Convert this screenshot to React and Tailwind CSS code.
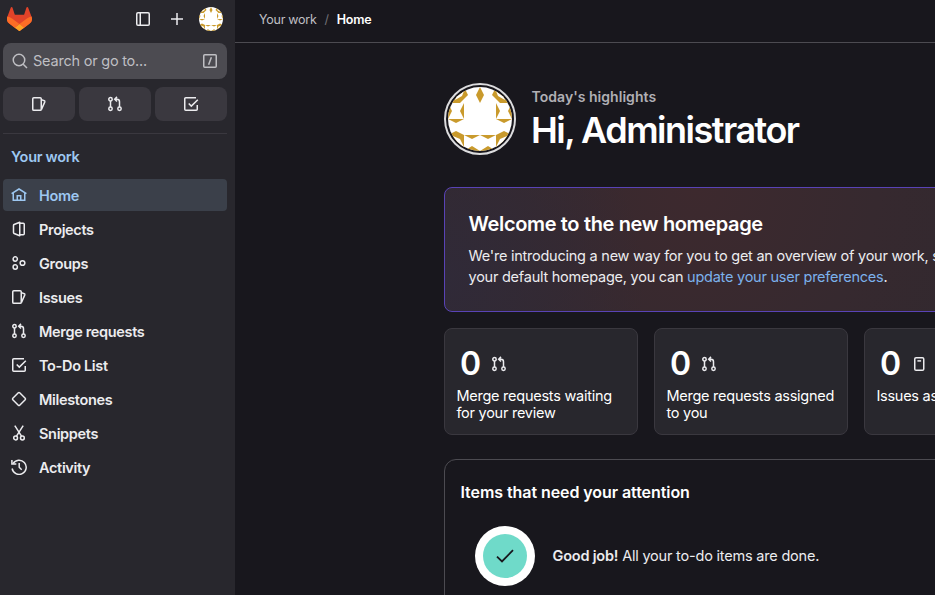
import React from "react";

const iconBody = {
  sidebar: (
    <>
      <rect x="1.75" y="1.75" width="12.5" height="12.5" rx="1.25" />
      <path d="M5.25 1.75v12.5" />
    </>
  ),
  plus: <path d="M8 2v12M2 8h12" />,
  search: (
    <>
      <circle cx="7" cy="7" r="5.75" />
      <path d="M11.2 11.2 15 15" />
    </>
  ),
  slash: (
    <>
      <rect x="1.75" y="1.75" width="12.5" height="12.5" rx="1" />
      <path d="M9.4 4.2 6.6 11.8" />
    </>
  ),
  home: (
    <>
      <path d="M.6 6.6 8 2l7.4 4.6M2.25 5.8v7.45h11.5V5.8" />
      <path d="M6.25 13V8.75h3.5V13" />
    </>
  ),
  project: (
    <>
      <path d="M8.75 1.2 3.1 3.5a1 1 0 0 0-.6.9v7.2c0 .4.2.75.6.9l5.65 2.3z" strokeLinejoin="round" />
      <path d="M8.75 2.25h3.5a1 1 0 0 1 1 1v9.5a1 1 0 0 1-1 1h-3.5" />
    </>
  ),
  group: (
    <>
      <circle cx="4.25" cy="4" r="2.15" />
      <circle cx="4.25" cy="12" r="2.15" />
      <circle cx="11.5" cy="8" r="2.35" />
    </>
  ),
  issues: (
    <>
      <rect x="1.75" y="1.75" width="8.5" height="12.5" rx="1.1" />
      <path d="m10.3 3.6 3 1.1a.9.9 0 0 1 .5 1.15L10.5 13.4" />
    </>
  ),
  merge: (
    <>
      <circle cx="3.5" cy="3.2" r="1.7" />
      <circle cx="3.5" cy="12.8" r="1.7" />
      <circle cx="12.5" cy="12.8" r="1.7" />
      <path d="M3.5 5v6M12.5 11V5.7a2.5 2.5 0 0 0-2.5-2.5H8M10 .9 7.7 3.2 10 5.5" />
    </>
  ),
  todo: (
    <>
      <path d="M13 1.75H2.75a1 1 0 0 0-1 1v10.5a1 1 0 0 0 1 1h10.5a1 1 0 0 0 1-1V9" />
      <path d="m5.7 7.5 2.6 2.6 6.5-6.4" />
    </>
  ),
  milestone: (
    <path d="m7.3 1.8-5.5 5.5a1 1 0 0 0 0 1.4l5.5 5.5a1 1 0 0 0 1.4 0l5.5-5.5a1 1 0 0 0 0-1.4L8.7 1.8a1 1 0 0 0-1.4 0z" />
  ),
  snippet: (
    <>
      <circle cx="4.6" cy="13" r="1.9" />
      <circle cx="11.4" cy="13" r="1.9" />
      <path d="m3.8.6 6.7 10.6M12.2.6 5.5 11.2" />
    </>
  ),
  activity: (
    <>
      <path d="M2 4.6a7.1 7.1 0 1 1-.9 4.9" />
      <path d="M.9 1v4h4.4" />
      <path d="M8.2 4v4.2l2.5 2.5" />
    </>
  ),
  issue: (
    <>
      <rect x="3.75" y="1.75" width="9" height="12.5" rx="1.3" />
      <path d="M6.4 4.9h3.7" />
    </>
  ),
};

function Icon({ name, className = "" }) {
  return (
    <svg
      viewBox="0 0 16 16"
      className={`size-4 shrink-0 ${className}`}
      fill="none"
      stroke="currentColor"
      strokeWidth="1.5"
    >
      {iconBody[name]}
    </svg>
  );
}

function Logo() {
  return (
    <svg width="25" height="24" viewBox="0 0 25 24">
      <path
        fill="#E24329"
        d="m24.507 9.5-.034-.09L21.082.562a.896.896 0 0 0-1.694.091l-2.29 7.01H7.825L5.535.653a.898.898 0 0 0-1.694-.09L.451 9.411.416 9.5a6.297 6.297 0 0 0 2.09 7.278l.012.01.03.022 5.16 3.867 2.56 1.935 1.554 1.176a1.051 1.051 0 0 0 1.268 0l1.555-1.176 2.56-1.935 5.197-3.89.014-.01A6.297 6.297 0 0 0 24.507 9.5Z"
      />
      <path
        fill="#FC6D26"
        d="m24.507 9.5-.034-.09a11.44 11.44 0 0 0-4.56 2.051l-7.447 5.632 4.742 3.584 5.197-3.89.014-.01A6.297 6.297 0 0 0 24.507 9.5Z"
      />
      <path
        fill="#FCA326"
        d="m7.707 20.677 2.56 1.935 1.555 1.176a1.051 1.051 0 0 0 1.268 0l1.555-1.176 2.56-1.935-4.743-3.584-4.795 3.584Z"
      />
      <path
        fill="#FC6D26"
        d="M5.01 11.461a11.43 11.43 0 0 0-4.56-2.05L.416 9.5a6.297 6.297 0 0 0 2.09 7.278l.012.01.03.022 5.16 3.867 4.745-3.584-7.444-5.632Z"
      />
    </svg>
  );
}

// Left half of the identicon; the right half is its mirror image.
function IdenticonHalf() {
  return (
    <>
      <g fill="#c99a2c">
        <path d="M0 16V8l8-8h8l4 8-8 8z" />
        <path d="M32 0l-4 8 4 8z" />
        <path d="M0 16l4 8-4 8zM16 16l-4 8 4 8z" />
        <path d="M0 32h16l-8 4z" />
        <path d="M0 48l8-4 8 4v16H8l-8-8z" />
        <path d="M16 48h16l-8 4zM16 64l8-5 8 5z" />
      </g>
      <g fill="#fff">
        <path d="M7 13l2-5 7-4-2 5z" />
        <path d="M5 49l7 3 4 8-7-4z" />
      </g>
    </>
  );
}

function Identicon({ className }) {
  return (
    <svg viewBox="0 0 64 64" className={`rounded-full bg-white ${className}`}>
      <IdenticonHalf />
      <g transform="translate(64 0) scale(-1 1)">
        <IdenticonHalf />
      </g>
    </svg>
  );
}

const navItems = [
  ["home", "Home"],
  ["project", "Projects"],
  ["group", "Groups"],
  ["issues", "Issues"],
  ["merge", "Merge requests"],
  ["todo", "To-Do List"],
  ["milestone", "Milestones"],
  ["snippet", "Snippets"],
  ["activity", "Activity"],
];

function Sidebar() {
  return (
    <aside className="w-[235px] shrink-0 bg-[#28272d] pl-[3px] pr-2 text-[#ececef]">
      <div className="flex h-[43px] items-start pl-1 pt-[7px]">
        <Logo />
        <div className="ml-auto flex items-center pr-1">
          <Icon name="sidebar" />
          <Icon name="plus" className="ml-[18px]" />
          <Identicon className="ml-[14px] size-6" />
        </div>
      </div>
      <div className="flex h-9 items-center rounded-lg bg-[#4c4b51] pl-[9px] pr-[9px] text-[#bfbfc3]">
        <Icon name="search" />
        <span className="ml-[5px] text-[14.5px] tracking-[-0.22px]">Search or go to...</span>
        <Icon name="slash" className="ml-auto" />
      </div>
      <div className="mt-2 grid grid-cols-3 gap-1">
        {["issues", "merge", "todo"].map((name) => (
          <div key={name} className="flex h-[34px] items-center justify-center rounded-lg bg-[#3a383f]">
            <Icon name={name} />
          </div>
        ))}
      </div>
      <div className="mt-3 border-t border-[#3a383f]" />
      <h2 className="mt-[13px] pl-2 text-[14.5px] font-semibold leading-5 tracking-[-0.3px] text-[#9dc7f1]">
        Your work
      </h2>
      <nav className="mt-3 flex flex-col gap-0.5">
        {navItems.map(([icon, label], i) => (
          <a
            key={label}
            className={`flex h-8 items-center rounded px-2 text-[14.5px] font-semibold tracking-[-0.33px] ${
              i === 0 ? "bg-[#3b404a] text-[#9dc7f1]" : ""
            }`}
          >
            <Icon name={icon} className="mb-px" />
            <span className="ml-3 pt-0.5">{label}</span>
          </a>
        ))}
      </nav>
    </aside>
  );
}

function StatCard({ icon, label }) {
  return (
    <div className="h-[107px] w-[194px] shrink-0 rounded-lg border border-[#3a383f] bg-[#28272d] px-[11px] pt-4">
      <div className="flex h-9 items-center pl-1">
        <span className="w-5 pt-0.5 text-[32px] font-semibold leading-9 tracking-[-1px] text-white">0</span>
        <Icon name={icon} className="ml-[11px] mt-0.5 text-[#ececef]" />
      </div>
      <p className="ml-[0.4px] mt-1.5 text-[14.5px] leading-[17px] tracking-[-0.25px] text-white">{label}</p>
    </div>
  );
}

export default function App() {
  return (
    <div className="flex h-[595px] w-[935px] overflow-hidden bg-[#18171d] font-['Inter','Liberation_Sans',sans-serif]">
      <Sidebar />
      <main className="min-w-0 flex-1 overflow-hidden">
        <header className="flex h-[43px] items-center border-b border-[#4c4b51] pb-[2px] pl-6 text-[12.5px] tracking-[-0.26px]">
          <span className="text-[#bfbfc3]">Your work</span>
          <span className="mx-2 text-[#737278]">/</span>
          <span className="font-semibold text-white">Home</span>
        </header>
        <div className="w-[900px] pl-[209px] pt-10">
          <div className="flex h-[72px]">
            <div className="flex size-[72px] items-center justify-center rounded-full border-2 border-[#dcdcde]">
              <Identicon className="size-16" />
            </div>
            <div className="ml-[15px] pt-1">
              <p className="pl-[0.5px] text-[14px] font-semibold leading-5 tracking-[0.04px] text-[#b0afb4]">
                Today's highlights
              </p>
              <h1 className="text-[36px] font-semibold leading-[46px] tracking-[-1.5px] text-white">
                Hi, Administrator
              </h1>
            </div>
          </div>
          <section className="mt-8 h-[125px] w-[840px] rounded-lg border border-[#5943b6] bg-[radial-gradient(circle_at_0px_90px,#302a38_0px,#302a3800_200px),radial-gradient(circle_at_250px_0px,#3d292e_0px,#36292f_180px,#2c282e_480px)] pl-[23.5px] pt-6">
            <h2 className="text-[20px] font-semibold leading-6 tracking-[-0.35px] text-white">
              Welcome to the new homepage
            </h2>
            <p className="mt-[9px] whitespace-nowrap text-[14.5px] leading-[21px] tracking-[-0.24px] text-[#ececef]">
              We're introducing a new way for you to get an overview of your work, so you can
              <br />
              your default homepage, you can <a className="text-[#7cb1ec]">update your user preferences</a>.
            </p>
          </section>
          <div className="mt-4 flex gap-4">
            <StatCard icon="merge" label="Merge requests waiting for your review" />
            <StatCard icon="merge" label="Merge requests assigned to you" />
            <StatCard icon="issue" label="Issues assigned to you" />
          </div>
          <section className="mt-6 h-[200px] w-[840px] rounded-xl border border-[#4c4b51] px-[15px] pt-5">
            <h3 className="pl-[0.5px] text-[16px] font-semibold leading-6 tracking-[-0.07px] text-white">
              Items that need your attention
            </h3>
            <div className="mt-[22px] flex items-center pl-[15px]">
              <div className="flex size-[60px] items-center justify-center rounded-full bg-white">
                <div className="flex size-11 items-center justify-center rounded-full bg-[#6fdac9]">
                  <svg viewBox="0 0 18 14" className="h-3.5 w-[18px]" fill="none" stroke="#18171d" strokeWidth="1.8">
                    <path d="m1 7.6 5 4.8L17 1.2" />
                  </svg>
                </div>
              </div>
              <p className="ml-[17.5px] text-[14.5px] tracking-[-0.2px] text-[#ececef]">
                <strong className="font-semibold">Good job!</strong> All your to-do items are done.
              </p>
            </div>
          </section>
        </div>
      </main>
    </div>
  );
}
